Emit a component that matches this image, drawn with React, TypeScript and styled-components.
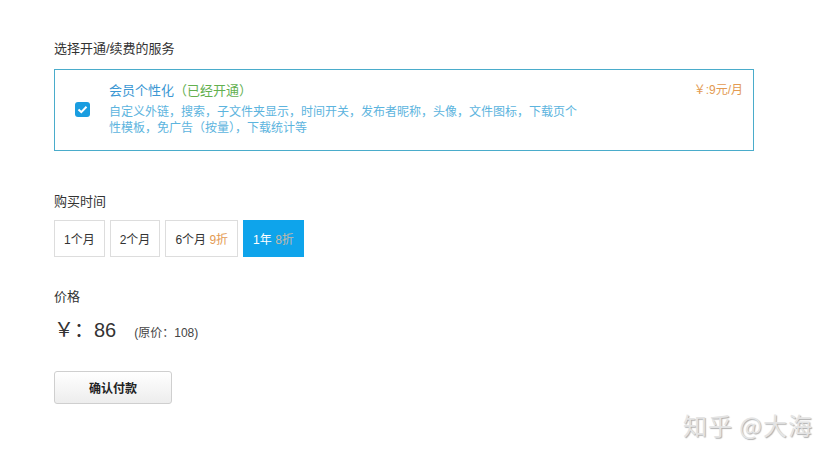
import React, { useState } from 'react';
import styled, { createGlobalStyle } from 'styled-components';

const GlobalStyle = createGlobalStyle`
  html, body {
    margin: 0;
    padding: 0;
    background: #fff;
  }
  body {
    font-family: "Liberation Sans", "Noto Sans CJK SC", sans-serif;
    color: #333;
  }
`;

const Page = styled.div`
  position: relative;
  width: 833px;
  height: 458px;
  padding: 40px 0 0 54px;
  box-sizing: border-box;
  overflow: hidden;
`;

const Label = styled.div`
  font-size: 13px;
  line-height: 18px;
  color: #333;
`;

const ServiceBox = styled.label`
  display: flex;
  align-items: flex-start;
  width: 700px;
  height: 82px;
  margin-top: 11px;
  box-sizing: border-box;
  border: 1px solid #4aaccb;
  padding: 12px 10px 0 20px;
  cursor: pointer;
`;

const CheckBox = styled.span<{ $checked: boolean }>`
  flex: none;
  width: 15px;
  height: 15px;
  margin-top: 20px;
  border-radius: 3px;
  background: ${p => (p.$checked ? '#1a9de0' : '#fff')};
  border: ${p => (p.$checked ? 'none' : '1px solid #bbb')};
  display: flex;
  align-items: center;
  justify-content: center;
`;

const ServiceBody = styled.div`
  flex: 1;
  margin-left: 19px;
`;

const ServiceName = styled.div`
  font-size: 13px;
  line-height: 18px;
  color: #3b97d3;
`;

const Opened = styled.span`
  color: #63b04f;
`;

const ServiceDesc = styled.div`
  margin-top: 4px;
  width: 470px;
  font-size: 12px;
  line-height: 16px;
  color: #5cb4de;
`;

const ServicePrice = styled.div`
  flex: none;
  font-size: 12px;
  line-height: 16px;
  color: #e39a52;
`;

const TimeSection = styled.div`
  margin-top: 42px;
`;

const OptionRow = styled.div`
  display: flex;
  gap: 5px;
  margin-top: 9px;
`;

const Option = styled.button<{ $active: boolean }>`
  height: 37px;
  padding: 0 9px;
  box-sizing: border-box;
  border: 1px solid ${p => (p.$active ? '#0ea4eb' : '#ddd')};
  background: ${p => (p.$active ? '#0ea4eb' : '#fff')};
  color: ${p => (p.$active ? '#fff' : '#333')};
  font-family: "Liberation Sans", "Noto Sans CJK SC", sans-serif;
  font-size: 12px;
  cursor: pointer;
`;

const Discount = styled.span<{ $active: boolean }>`
  color: ${p => (p.$active ? '#c7b9a8' : '#e39a52')};
`;

const PriceSection = styled.div`
  margin-top: 31px;
`;

const PriceRow = styled.div`
  display: flex;
  align-items: baseline;
  margin-top: 8px;
`;

const PriceValue = styled.span`
  font-size: 20px;
  color: #333;
`;

const Original = styled.span`
  margin-left: 18px;
  font-size: 12px;
  color: #444;
`;

const PayButton = styled.button`
  margin-top: 28px;
  width: 118px;
  height: 33px;
  border: 1px solid #cfcfcf;
  border-radius: 3px;
  background: linear-gradient(#fff, #ededed);
  font-family: "Liberation Sans", "Noto Sans CJK SC", sans-serif;
  font-size: 12px;
  font-weight: bold;
  color: #222;
  cursor: pointer;
`;

const Watermark = styled.div`
  position: absolute;
  right: 20px;
  bottom: 16px;
  font-family: "Noto Sans CJK SC", sans-serif;
  font-size: 24px;
  letter-spacing: 1px;
  color: #e4e4e4;
  text-shadow: 1px 1px 1px #b0b0b0;
`;

const options = [
  { id: 1, text: '1个月' },
  { id: 2, text: '2个月' },
  { id: 6, text: '6个月', discount: '9折' },
  { id: 12, text: '1年', discount: '8折' },
];

const App: React.FC = () => {
  const [checked, setChecked] = useState(true);
  const [period, setPeriod] = useState(12);

  return (
    <Page>
      <GlobalStyle />
      <Label>选择开通/续费的服务</Label>
      <ServiceBox onClick={() => setChecked(!checked)}>
        <CheckBox $checked={checked}>
          {checked && (
            <svg width="11" height="9" viewBox="0 0 11 9">
              <path d="M1.5 4.5 L4.3 7.2 L9.5 1.8" fill="none" stroke="#fff" strokeWidth="2" />
            </svg>
          )}
        </CheckBox>
        <ServiceBody>
          <ServiceName>
            会员个性化<Opened>（已经开通）</Opened>
          </ServiceName>
          <ServiceDesc>
            自定义外链，搜索，子文件夹显示，时间开关，发布者昵称，头像，文件图标，下载页个性模板，免广告（按量），下载统计等
          </ServiceDesc>
        </ServiceBody>
        <ServicePrice>￥:9元/月</ServicePrice>
      </ServiceBox>

      <TimeSection>
        <Label>购买时间</Label>
        <OptionRow>
          {options.map(o => (
            <Option key={o.id} $active={period === o.id} onClick={() => setPeriod(o.id)}>
              {o.text}
              {o.discount && <Discount $active={period === o.id}> {o.discount}</Discount>}
            </Option>
          ))}
        </OptionRow>
      </TimeSection>

      <PriceSection>
        <Label>价格</Label>
        <PriceRow>
          <PriceValue>￥：86</PriceValue>
          <Original>(原价：108)</Original>
        </PriceRow>
      </PriceSection>

      <PayButton>确认付款</PayButton>

      <Watermark>知乎 @大海</Watermark>
    </Page>
  );
};

export default App;
